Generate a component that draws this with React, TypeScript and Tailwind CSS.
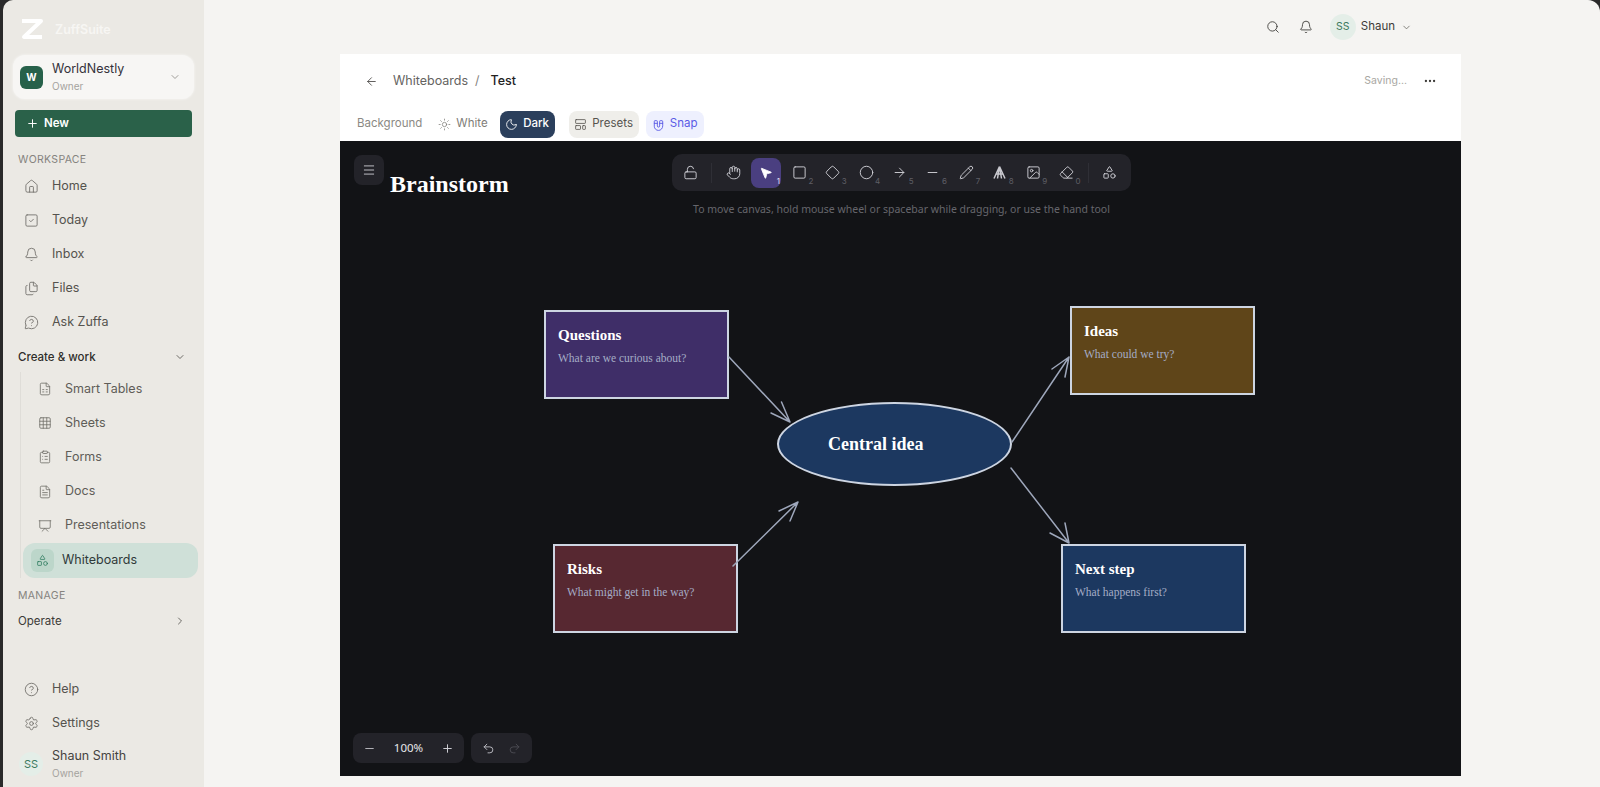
import React from "react";
import {
  House, SquareCheck, Bell, Files, MessageCircleQuestion, FileSpreadsheet, Grid3x3, ClipboardList, FileText, Presentation, Shapes,
  CircleHelp, Settings, ChevronDown, ChevronRight, Plus, Minus, Search, ArrowLeft, Ellipsis, Sun, Moon, LayoutTemplate, Magnet,
  Menu, LockOpen, Hand, MousePointer2, Square, Diamond, Circle, ArrowRight, Pencil, Image, Eraser, Undo2, Redo2,
} from "lucide-react";

const hand = { fontFamily: "cursive" };

function NavItem({ icon: Icon, label }: { icon: any; label: string }) {
  return (
    <div className="flex h-[34.2px] items-center pl-[21px] text-[12.5px] text-[#55534e]">
      <Icon size={15} strokeWidth={1.4} className="text-[#716f6a]" />
      <span className="ml-[13px]">{label}</span>
    </div>
  );
}

function SubItem({ icon: Icon, label }: { icon: any; label: string }) {
  return (
    <div className="flex h-[34.2px] items-center pl-[17px] text-[12.5px] text-[#5f5d58]">
      <Icon size={14} strokeWidth={1.4} className="text-[#716f6a]" />
      <span className="ml-[13px]">{label}</span>
    </div>
  );
}

function Sidebar() {
  return (
    <aside className="flex h-full w-[201px] shrink-0 flex-col rounded-tl-[10px] bg-[#ebe9e4] text-[#3d3b38]">
      <div className="flex h-[55px] items-center pl-[17px] pt-[3px]">
        <svg width="23" height="22" viewBox="0 0 23 22" fill="none">
          <path d="M2 3h19L4 19h18" stroke="#ffffff" strokeWidth="4" strokeLinejoin="round" />
        </svg>
        <span className="ml-[12px] mt-[3px] text-[12.5px] font-semibold text-[#f7f6f3]">ZuffSuite</span>
      </div>
      <div className="mx-[10px] flex h-[44px] items-center rounded-[12px] bg-[#f7f6f4] pl-[7px] pr-[13px] shadow-[0_0_3px_rgba(255,255,255,0.7)]">
        <div className="flex h-[23px] w-[23px] items-center justify-center rounded-[6px] bg-[#27614a] text-[10px] font-bold text-white">W</div>
        <div className="ml-[9px] flex-1 leading-none">
          <div className="text-[12.5px] text-[#34323a]">WorldNestly</div>
          <div className="mt-[5px] text-[10px] text-[#a5a39e]">Owner</div>
        </div>
        <ChevronDown size={12} className="text-[#a09e99]" />
      </div>
      <div className="mx-[12px] mt-[11px] flex h-[27px] items-center rounded-[4px] bg-[#2a6149] pl-[11px] text-[11.5px] font-semibold text-white">
        <Plus size={13} strokeWidth={1.8} />
        <span className="ml-[5px]">New</span>
      </div>
      <div className="mt-[17px] pl-[15px] text-[10.5px] leading-[12px] tracking-[0.03em] text-[#85837e]">WORKSPACE</div>
      <div className="mt-[3px]">
        <NavItem icon={House} label="Home" />
        <NavItem icon={SquareCheck} label="Today" />
        <NavItem icon={Bell} label="Inbox" />
        <NavItem icon={Files} label="Files" />
        <NavItem icon={MessageCircleQuestion} label="Ask Zuffa" />
      </div>
      <div className="mt-[9px] flex items-center justify-between pl-[15px] pr-[18px] text-[11.5px] font-medium leading-[16px] text-[#2f2e2b]">
        <span>Create &amp; work</span>
        <ChevronDown size={12} className="text-[#6e6c67]" />
      </div>
      <div className="ml-[17px] mt-[7px] border-l border-[#dfddd8]">
        <SubItem icon={FileSpreadsheet} label="Smart Tables" />
        <SubItem icon={Grid3x3} label="Sheets" />
        <SubItem icon={ClipboardList} label="Forms" />
        <SubItem icon={FileText} label="Docs" />
        <SubItem icon={Presentation} label="Presentations" />
        <div className="ml-[2px] flex h-[35px] w-[175px] items-center rounded-[12px] bg-[#cfe0d8] pl-[8px] text-[12.5px] text-[#2f3a3a]">
          <div className="flex h-[23px] w-[23px] items-center justify-center rounded-[6px] bg-[#bcd6ca]">
            <Shapes size={13} strokeWidth={1.4} className="text-[#2a7a5d]" />
          </div>
          <span className="ml-[8px]">Whiteboards</span>
        </div>
      </div>
      <div className="mt-[12px] pl-[15px] text-[10.5px] leading-[12px] tracking-[0.03em] text-[#85837e]">MANAGE</div>
      <div className="mt-[11px] flex items-center justify-between pl-[15px] pr-[18px] text-[11.5px] leading-[16px] text-[#3d3b38]">
        <span>Operate</span>
        <ChevronRight size={12} className="text-[#6e6c67]" />
      </div>
      <div className="mt-auto">
        <NavItem icon={CircleHelp} label="Help" />
        <NavItem icon={Settings} label="Settings" />
        <div className="mb-[9px] mt-[9px] flex items-center pl-[16px]">
          <div className="flex h-[24px] w-[24px] items-center justify-center rounded-full bg-[#e4eee8] text-[11px] text-[#3c7a60]">SS</div>
          <div className="ml-[9px] leading-none">
            <div className="text-[12.5px] text-[#45433f]">Shaun Smith</div>
            <div className="mt-[6px] text-[10px] text-[#a5a39e]">Owner</div>
          </div>
        </div>
      </div>
    </aside>
  );
}

function ATool() {
  return (
    <svg width="15" height="15" viewBox="0 0 15 15" fill="none" stroke="#c9c9cf" strokeWidth="1.5" strokeLinejoin="round">
      <path d="M7.5 1.5 2 13.5M7.5 1.5 13 13.5M4.5 9h6M7.5 1.5 5.5 13.5M7.5 1.5 9.5 13.5" />
    </svg>
  );
}

function Tool({ icon: Icon, n, active, custom }: { icon?: any; n?: number; active?: boolean; custom?: React.ReactNode }) {
  return (
    <div className={`relative flex h-[30px] w-[30px] shrink-0 items-center justify-center rounded-[8px] ${active ? "bg-[#4a3f80]" : ""}`}>
      {custom ?? <Icon size={15} strokeWidth={1.5} className="text-[#d0d0d6]" />}
      {n !== undefined && (
        <span className={`absolute bottom-[3px] right-[1px] text-[8px] leading-none ${active ? "text-[#e6e4f5]" : "text-[#5f5f66]"}`}>{n}</span>
      )}
    </div>
  );
}

function Node({ x, y, bg, title, sub }: { x: number; y: number; bg: string; title: string; sub: string }) {
  return (
    <div
      className="absolute h-[89px] w-[185px] border-2 border-[#cdd5e2] pl-[12px] pt-[13px]"
      style={{ left: x, top: y, backgroundColor: bg, ...hand }}
    >
      <div className="text-[15px] font-bold leading-[20px] text-white">{title}</div>
      <div className="mt-[5px] whitespace-nowrap text-[11.5px] leading-[16px] text-[#a5adc6]">{sub}</div>
    </div>
  );
}

function Arrow({ d }: { d: string }) {
  return <path d={d} fill="none" stroke="#9ea7bb" strokeWidth="1.5" strokeLinecap="round" strokeLinejoin="round" />;
}

function Canvas() {
  return (
    <div className="relative flex-1 overflow-hidden bg-[#121316]">
      <div className="absolute left-[14px] top-[14px] flex h-[30px] w-[30px] items-center justify-center rounded-[8px] bg-[#232329]">
        <Menu size={14} strokeWidth={1.6} className="text-[#c9c9cf]" />
      </div>
      <div className="absolute left-[50px] top-[27px] text-[24px] font-bold leading-[32px] text-white" style={hand}>Brainstorm</div>

      <div className="absolute left-[332px] top-[13px] flex h-[37px] w-[459px] items-center rounded-[10px] bg-[#232329] pl-[3px]">
        <Tool icon={LockOpen} />
        <div className="mx-[6px] h-[20px] w-px bg-[#2f2f36]" />
        <Tool icon={Hand} />
        <div className="ml-[3px] flex gap-[3.4px]">
          <Tool active n={1} custom={<MousePointer2 size={14} strokeWidth={1.5} fill="#ffffff" className="text-white" />} />
          <Tool icon={Square} n={2} />
          <Tool icon={Diamond} n={3} />
          <Tool icon={Circle} n={4} />
          <Tool icon={ArrowRight} n={5} />
          <Tool icon={Minus} n={6} />
          <Tool icon={Pencil} n={7} />
          <Tool custom={<ATool />} n={8} />
          <Tool icon={Image} n={9} />
          <Tool icon={Eraser} n={0} />
        </div>
        <div className="mx-[6px] h-[20px] w-px bg-[#2f2f36]" />
        <Tool icon={Shapes} />
      </div>
      <div className="absolute left-[332px] top-[60px] w-[459px] text-center text-[10.5px] leading-[16px] text-[#66666c]" style={{ fontFamily: '"Noto Sans", sans-serif' }}>
        To move canvas, hold mouse wheel or spacebar while dragging, or use the hand tool
      </div>

      <Node x={204} y={169} bg="#3f2e68" title="Questions" sub="What are we curious about?" />
      <Node x={730} y={165} bg="#5f4519" title="Ideas" sub="What could we try?" />
      <Node x={213} y={403} bg="#572831" title="Risks" sub="What might get in the way?" />
      <Node x={721} y={403} bg="#1c3860" title="Next step" sub="What happens first?" />

      <div
        className="absolute left-[437px] top-[261px] flex h-[84px] w-[235px] items-center rounded-[50%] border-2 border-[#cdd5e2] bg-[#1c3860] pl-[49px] text-[18px] font-bold text-white"
        style={hand}
      >
        Central idea
      </div>

      <svg className="absolute left-0 top-0" width="1121" height="635" viewBox="0 0 1121 635">
        <Arrow d="M389 216 450 281M431 272 450 281 441.5 261" />
        <Arrow d="M672 301 729 216M712 228 729 216 725 236" />
        <Arrow d="M671 327 729 402M710 392 729 402 725 382" />
        <Arrow d="M393 425 458 361M439 370 458 361 450 380" />
      </svg>

      <div className="absolute bottom-[13px] left-[13px] flex h-[30px] w-[111px] items-center justify-between rounded-[8px] bg-[#232329] px-[10px] text-[11.5px] text-[#e6e6ea]">
        <Minus size={13} strokeWidth={1.8} className="text-[#b5b5bb]" />
        <span style={{ fontFamily: '"Noto Sans", sans-serif' }}>100%</span>
        <Plus size={13} strokeWidth={1.8} className="text-[#d0d0d6]" />
      </div>
      <div className="absolute bottom-[13px] left-[131px] flex h-[30px] w-[61px] items-center justify-around rounded-[8px] bg-[#232329] px-[4px]">
        <Undo2 size={13} strokeWidth={1.6} className="text-[#c9c9cf]" />
        <Redo2 size={13} strokeWidth={1.6} className="text-[#4f4f56]" />
      </div>
    </div>
  );
}

function Main() {
  return (
    <main className="flex h-full flex-1 flex-col rounded-tr-[12px] bg-[#f5f4f2] pb-[11px] pl-[136px] pr-[139px]">
      <header className="flex h-[54px] shrink-0 items-center justify-end pr-[49px] text-[#3d3b38]">
        <Search size={14} strokeWidth={1.5} />
        <Bell size={14} strokeWidth={1.5} className="ml-[19px]" />
        <div className="ml-[17px] flex h-[26px] w-[26px] items-center justify-center rounded-full bg-[#e4eee8] text-[10.5px] text-[#3c7a60]">SS</div>
        <span className="ml-[5px] text-[11.5px] text-[#3d3b38]">Shaun</span>
        <ChevronDown size={11} strokeWidth={1.6} className="ml-[6px] text-[#5f5d58]" />
      </header>
      <section className="flex flex-1 flex-col bg-white">
        <div className="flex h-[53px] shrink-0 items-center pl-[25px] pr-[24px] pt-[1px]">
          <ArrowLeft size={13} strokeWidth={1.6} className="text-[#4a4845]" />
          <span className="ml-[15px] text-[12.5px] text-[#65635f]">Whiteboards</span>
          <span className="ml-[7px] text-[12.5px] text-[#85837e]">/</span>
          <span className="ml-[11px] text-[12.5px] font-medium text-[#23221f]">Test</span>
          <span className="ml-auto text-[10.5px] text-[#a9a7a2]">Saving...</span>
          <Ellipsis size={14} strokeWidth={2} className="ml-[16px] text-[#3d3b38]" />
        </div>
        <div className="flex h-[34px] shrink-0 items-center pl-[17px] text-[11.5px]">
          <span className="text-[#8b8984]">Background</span>
          <div className="ml-[16px] flex items-center text-[#7f7d78]">
            <Sun size={13} strokeWidth={1.4} />
            <span className="ml-[5px]">White</span>
          </div>
          <div className="ml-[12px] flex h-[27px] w-[55px] items-center justify-center rounded-[8px] bg-[#2b3f5c] font-medium text-white">
            <Moon size={13} strokeWidth={1.6} />
            <span className="ml-[5px]">Dark</span>
          </div>
          <div className="ml-[14px] flex h-[27px] w-[70px] items-center justify-center rounded-[8px] bg-[#efeeea] text-[#55534e]">
            <LayoutTemplate size={13} strokeWidth={1.5} />
            <span className="ml-[5px]">Presets</span>
          </div>
          <div className="ml-[7px] flex h-[27px] w-[58px] items-center justify-center rounded-[8px] bg-[#eef0fe] text-[#5b5be6]">
            <Magnet size={13} strokeWidth={1.6} className="rotate-[135deg]" />
            <span className="ml-[5px]">Snap</span>
          </div>
        </div>
        <Canvas />
      </section>
    </main>
  );
}

export default function App() {
  return (
    <div className="flex h-[787px] w-[1600px] overflow-hidden bg-[#2a2a2a] pl-[3px]" style={{ fontFamily: 'Inter, "Noto Sans", sans-serif' }}>
      <Sidebar />
      <Main />
    </div>
  );
}
